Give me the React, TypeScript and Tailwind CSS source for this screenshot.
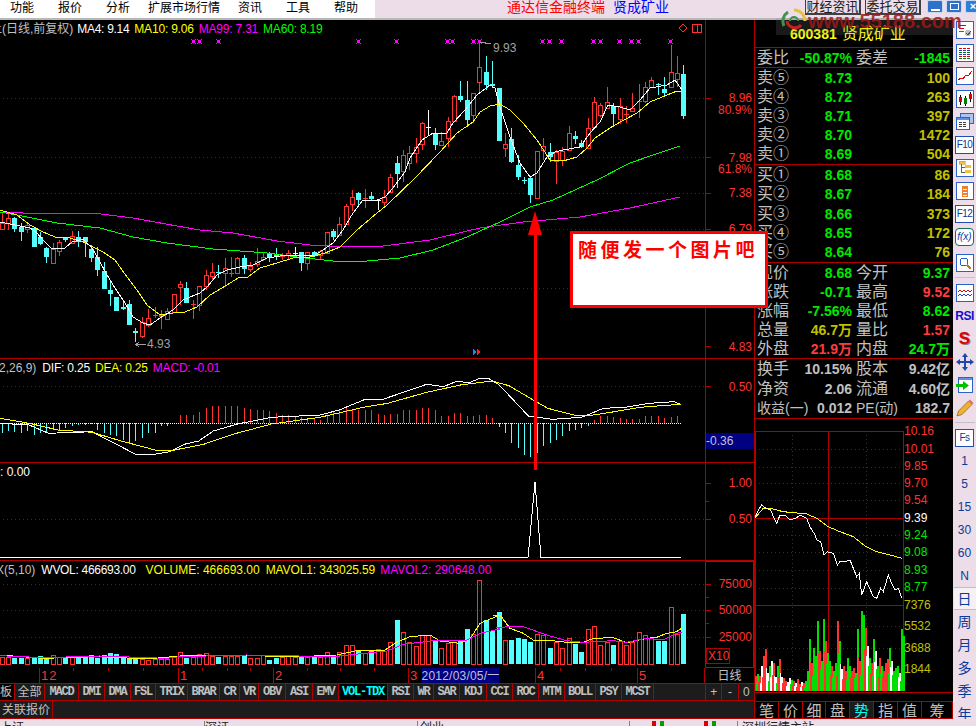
import React from 'react';

const LINE = '#b00000';
const DOT = '#a00000';
const UP = '#ff3232';
const DOWN = '#54ffff';

type Candle = [string, number, number, number, number];

// color, high, body top, body bottom, low (page pixels)
const candles: Candle[] = [
  ['r', 213, 223, 229, 229], ['r', 214, 218, 223, 230], ['c', 217, 218, 229, 232], ['c', 223, 227, 232, 241],
  ['r', 224, 225, 229, 233], ['c', 227, 228, 247, 247], ['c', 232, 237, 244, 245], ['c', 247, 248, 257, 263],
  ['r', 243, 249, 263, 263], ['r', 240, 242, 251, 256], ['c', 237, 237, 240, 242], ['r', 231, 236, 243, 243],
  ['c', 231, 237, 242, 247], ['c', 237, 237, 242, 257], ['c', 245, 249, 258, 262], ['c', 247, 257, 270, 276],
  ['c', 262, 271, 289, 289], ['c', 282, 290, 294, 306], ['c', 297, 297, 311, 311], ['c', 300, 307, 309, 310],
  ['c', 300, 304, 325, 325], ['c', 328, 331, 333, 342], ['r', 317, 322, 336, 338], ['r', 309, 318, 325, 327],
  ['r', 307, 315, 315, 318], ['r', 310, 315, 316, 329], ['r', 308, 311, 319, 319], ['r', 294, 294, 312, 312],
  ['r', 281, 284, 287, 305], ['c', 282, 288, 303, 303], ['r', 300, 304, 304, 319], ['r', 286, 286, 305, 311],
  ['r', 270, 275, 286, 290], ['r', 263, 272, 276, 280], ['c', 265, 272, 273, 278], ['r', 258, 268, 273, 287],
  ['r', 257, 273, 273, 277], ['r', 257, 258, 273, 274], ['c', 255, 258, 269, 274], ['r', 262, 266, 269, 272],
  ['r', 248, 261, 264, 267], ['r', 252, 257, 259, 261], ['c', 252, 253, 257, 262], ['c', 248, 254, 257, 260],
  ['r', 253, 256, 256, 260], ['r', 250, 253, 255, 260], ['w', 247, 253, 253, 255], ['c', 252, 252, 263, 271],
  ['r', 252, 252, 263, 270], ['c', 251, 252, 256, 257], ['r', 250, 251, 255, 259], ['r', 232, 232, 253, 253],
  ['c', 229, 231, 237, 240], ['r', 217, 224, 235, 236], ['r', 204, 206, 224, 225], ['r', 190, 197, 204, 211],
  ['c', 192, 193, 200, 205], ['r', 189, 198, 198, 208], ['c', 192, 196, 199, 201], ['w', 199, 200, 200, 210],
  ['r', 190, 197, 202, 207], ['r', 174, 177, 192, 193], ['c', 156, 163, 174, 188], ['r', 150, 155, 171, 182],
  ['r', 146, 153, 163, 170], ['r', 138, 147, 153, 163], ['r', 122, 123, 144, 150], ['w', 110, 127, 127, 135],
  ['c', 128, 133, 145, 150], ['r', 132, 141, 145, 146], ['r', 117, 121, 138, 147], ['r', 95, 96, 121, 122],
  ['c', 81, 96, 100, 102], ['c', 81, 100, 120, 127], ['r', 93, 93, 115, 123], ['r', 43, 67, 82, 93],
  ['c', 56, 72, 85, 90], ['c', 61, 84, 86, 88], ['c', 88, 88, 141, 141], ['r', 133, 144, 148, 157],
  ['c', 128, 139, 162, 163], ['c', 155, 165, 177, 180], ['c', 177, 180, 180, 184], ['c', 177, 178, 195, 203],
  ['r', 151, 151, 198, 199], ['r', 138, 146, 150, 160], ['c', 143, 152, 157, 162], ['r', 150, 152, 161, 184],
  ['r', 147, 151, 160, 166], ['r', 126, 133, 150, 150], ['c', 131, 136, 139, 144], ['c', 140, 143, 147, 148],
  ['r', 118, 128, 148, 149], ['r', 97, 102, 127, 127], ['r', 103, 105, 115, 117], ['r', 87, 102, 108, 109],
  ['c', 103, 106, 114, 127], ['r', 98, 106, 119, 124], ['r', 106, 114, 114, 123], ['r', 93, 108, 111, 112],
  ['r', 84, 101, 101, 118], ['r', 82, 87, 101, 103], ['r', 77, 80, 87, 88], ['c', 83, 84, 84, 95],
  ['c', 77, 89, 93, 96], ['r', 45, 72, 87, 87], ['r', 56, 73, 79, 87], ['c', 65, 74, 116, 119],
];

const ma4 = '0,222 20,226 30,228 37,233 43,240 52,249 65,248 72,242 83,239 92,248 100,262 107,275 115,288 125,303 133,317 143,323 150,325 160,318 173,310 183,300 190,297 200,293 207,287 217,275 227,270 240,267 253,265 267,258 287,255 300,255 313,256 323,250 333,243 343,230 353,213 363,200 377,200 385,197 393,188 405,172 410,158 422,140 433,133 447,133 453,123 465,110 477,95 490,85 495,88 500,107 510,137 520,163 530,177 537,173 547,157 555,152 563,150 580,147 590,133 600,122 608,105 620,107 630,110 640,100 650,88 667,85 675,80 682,90';
const ma10 = '0,210 17,215 30,225 43,232 55,237 70,238 83,242 93,247 103,252 115,260 127,277 137,290 147,305 160,315 173,313 185,312 197,307 210,295 227,285 238,278 248,277 260,268 277,263 293,258 310,257 325,253 340,247 357,230 377,213 387,205 415,178 440,152 457,133 473,122 480,112 490,106 500,104 510,110 523,123 537,140 550,160 563,161 577,157 587,148 595,138 613,126 637,113 650,102 667,95 677,91 682,92';
const ma99 = '0,212 23,213 93,213 133,218 177,226 200,230 233,233 277,241 310,245 350,247 383,246 430,240 467,231 480,228 523,222 580,217 630,208 680,197';
const ma60 = '0,212 17,215 57,223 100,228 133,237 167,243 213,249 267,253 297,257 333,261 367,261 400,258 433,250 467,237 500,222 530,207 553,200 597,180 630,163 653,155 680,146';

// bar tops, read off the volume pane
const volTops = [305, 305, 308, 310, 308, 310, 303, 308, 300, 307, 308, 307, 308, 308, 300, 308, 300, 294, 297, 308, 308, 305, 313, 315, 313, 313, 313, 303, 292, 308, 305, 297, 295, 303, 305, 303, 303, 303, 303, 308, 308, 300, 315, 310, 305, 300, 307, 307, 305, 307, 305, 292, 305, 292, 270, 270, 287, 293, 288, 282, 287, 262, 195, 232, 262, 273, 240, 240, 255, 280, 265, 262, 255, 222, 238, 75, 195, 228, 170, 255, 255, 250, 252, 260, 238, 240, 280, 262, 280, 250, 268, 290, 222, 212, 270, 260, 270, 258, 270, 262, 232, 240, 250, 258, 257, 155, 237, 178];

const volMa1 = [[0, 300], [130, 310], [300, 305], [440, 312], [540, 303], [740, 302], [900, 305], [1010, 300], [1080, 285], [1150, 288], [1190, 262], [1230, 245], [1290, 240], [1320, 258], [1380, 265], [1410, 252], [1440, 205], [1500, 180]];
const volMa1b = [[40, 180], [60, 180], [90, 220], [130, 235], [160, 255], [200, 255], [260, 262], [310, 262], [340, 250], [400, 248], [440, 263], [500, 250], [530, 247], [560, 235], [590, 230], [605, 220]];
const volMa2 = [[0, 302], [130, 308], [300, 303], [500, 310], [540, 305], [740, 300], [1000, 305], [1160, 288], [1210, 268], [1260, 262], [1320, 255], [1400, 255], [1440, 235], [1500, 222]];
const volMa2b = [[50, 217], [100, 215], [130, 215], [200, 240], [260, 257], [310, 262], [400, 257], [440, 262], [500, 250], [550, 255], [590, 235], [605, 232]];

const toPts = (a: number[][], b: number[][]) =>
  [...a.map(([x, y]) => `${x / 3},${555 + y / 3}`), ...b.map(([x, y]) => `${480 + x / 3},${555 + y / 3}`)].join(' ');

// MACD histogram, read at 3x: positive is red, negative cyan
const hist = [-30, -25, -28, -30, -25, -35, -30, -28, -20, -25, -15, -8, -5, -5, -4, -20, -30, -35, -40, -50, -60, -55, -45, -30, -30, -10, -8, 0, 23, 25, 25, 33, 45, 50, 52, 52, 50, 52, 45, 42, 38, 38, 35, 30, 25, 25, 20, 18, 15, 12, 10, 25, 35, 40, 45, 38, 38, 40, 38, 28, 25, 28, 28, 38, 38, 38, 45, 45, 38, 22, 22, 30, 30, 20, 20, 25, 25, 15, -12, -30, -60, -75, -95, -103, -90, -70, -60, -50, -40, -25, -20, -15, -8, 10, 20, 20, 18, 15, 12, 12, 12, 20, 22, 20, 15, 18, 20];

const macdPts = (s: string) =>
  s.split(' ').map((p) => {
    const [x, y] = p.split(',').map(Number);
    return `${(x / 2.063).toFixed(1)},${(355 + y / 3).toFixed(1)}`;
  }).join(' ');
const dif = macdPts('0,205 60,210 100,235 190,230 230,260 280,298 310,300 350,290 380,268 410,258 440,228 490,207 560,187 660,180 700,165 750,135 790,133 840,108 880,88 915,95 940,80 970,82 990,70 1010,72 1030,90 1090,183 1140,193 1200,187 1245,160 1290,157 1340,145 1390,140 1404,148');
const dea = macdPts('0,190 60,205 120,225 190,232 250,258 320,285 360,285 420,268 480,238 560,207 660,187 750,157 800,145 880,112 950,90 1015,78 1050,92 1100,135 1130,160 1190,182 1215,182 1260,172 1320,157 1404,148');

const z8Pts = (s: string) =>
  s.split(' ').map((p) => {
    const [x, y] = p.split(',').map(Number);
    return `${(750 + x / 3).toFixed(1)},${(420 + y / 3).toFixed(1)}`;
  }).join(' ');
const dayPrice = z8Pts('14,295 25,270 35,255 48,265 62,270 70,290 80,310 90,285 105,285 120,300 140,293 150,285 170,295 180,320 195,345 200,360 212,365 222,405 232,395 250,400 262,435 270,425 285,425 300,420 320,470 328,460 335,525 350,485 370,530 380,535 392,505 400,515 415,465 425,490 435,510 445,505 455,533');
const dayAvg = z8Pts('14,295 40,265 60,265 100,275 170,282 200,295 235,320 270,335 310,350 345,378 380,395 420,405 455,415');
const dayVols = [15, 17, 15, 25, 35, 42, 18, 25, 30, 28, 14, 25, 32, 14, 13, 10, 9, 13, 11, 10, 8, 12, 7, 9, 8, 10, 20, 52, 28, 43, 35, 70, 40, 30, 72, 50, 38, 30, 25, 20, 28, 70, 50, 22, 25, 20, 33, 25, 20, 23, 18, 62, 30, 80, 76, 63, 45, 33, 28, 52, 40, 25, 33, 25, 20, 28, 32, 43, 30, 20, 23, 25, 18, 62, 55];
const dayColors = 'RGRWRRWGWRWGRWRRWWGRWRRWRGGGRGGGRGGRGGRGGRGWRRGGRRGGRGGRWGRGWGRGRRRGWGGGW';
const dayColor = (i: number) => (dayColors[i] === 'R' ? UP : dayColors[i] === 'W' ? '#ffffff' : '#00e000');

const marks = [193, 199, 218, 358, 396, 447, 452, 473, 479, 542, 549, 561, 593, 600, 619, 631, 638, 670];

const candleX = (i: number) => Math.round(1.7 + 6.37 * i);

const Dotted = ({ y, x2 = 705, x1 = 3 }: { y: number; x2?: number; x1?: number }) => (
  <line x1={x1} x2={x2} y1={y + 0.5} y2={y + 0.5} stroke={DOT} strokeDasharray="1 3" />
);

const AxisText = ({ y, children, fill = UP }: { y: number; children: React.ReactNode; fill?: string }) => (
  <text x={752} y={y + 4} textAnchor="end" fontSize={12} fill={fill}>
    {children}
  </text>
);

const Line = ({ points, color }: { points: string; color: string }) => (
  <polyline points={points} fill="none" stroke={color} strokeWidth={1} shapeRendering="crispEdges" />
);

const MainChart = () => (
  <svg viewBox="0 20 754 338" className="absolute inset-0 h-full w-full" shapeRendering="crispEdges">
    {[98, 157, 193, 229, 288].map((y) => <Dotted key={y} y={y} />)}
    <line x1={705.5} x2={705.5} y1={20} y2={359} stroke={LINE} />
    {[98, 157, 193, 229, 346].map((y) => <line key={y} x1={705} x2={711} y1={y + 0.5} y2={y + 0.5} stroke={LINE} />)}
    {marks.map((x) => (
      <g key={x} fill="#ff00ff">
        <rect x={x - 2} y={39} width={1} height={1} />
        <rect x={x + 2} y={39} width={1} height={1} />
        <rect x={x - 1} y={40} width={3} height={3} />
        <rect x={x - 2} y={43} width={1} height={1} />
        <rect x={x + 2} y={43} width={1} height={1} />
      </g>
    ))}
    {candles.map(([c, hi, top, bot, lo], i) => {
      const x = candleX(i);
      const color = c === 'r' ? UP : c === 'c' ? DOWN : '#ffffff';
      return (
        <g key={i} stroke={color}>
          <line x1={x + 0.5} x2={x + 0.5} y1={hi} y2={lo} />
          {top === bot ? (
            <line x1={x - 2} x2={x + 3} y1={top + 0.5} y2={top + 0.5} />
          ) : c === 'c' ? (
            <rect x={x - 2} y={top} width={5} height={bot - top} fill={color} stroke="none" />
          ) : (
            <rect x={x - 1.5} y={top + 0.5} width={4} height={bot - top} fill="#000" />
          )}
        </g>
      );
    })}
    <Line points={ma99} color="#ff00ff" />
    <Line points={ma60} color="#00ff00" />
    <Line points={ma10} color="#ffff00" />
    <Line points={ma4} color="#ffffff" />
    <polyline points="480,42 491,44" stroke="#a0a0a0" fill="none" />
    <text x={493} y={52} fontSize={12} fill="#a0a0a0">9.93</text>
    <path d="M135 344.5h11M135 344.5l4 -2M135 344.5l4 2" stroke="#a0a0a0" fill="none" />
    <text x={147} y={348} fontSize={12} fill="#a0a0a0">4.93</text>
    <path d="M473 349l4 3l-4 3z" fill="#2080ff" />
    <path d="M477 349l4 3l-4 3z" fill="#ff2020" />
    <path d="M683 24l4 4l-4 4l-4 -4z" fill="none" stroke={UP} />
    <path d="M692.5 24.5h9v8h-9zM697.5 24.5v8" fill="none" stroke={UP} />
    <AxisText y={98}>8.96</AxisText>
    <AxisText y={110}>80.9%</AxisText>
    <AxisText y={158}>7.98</AxisText>
    <AxisText y={169}>61.8%</AxisText>
    <AxisText y={193}>7.38</AxisText>
    <AxisText y={229}>6.79</AxisText>
    <AxisText y={347}>4.83</AxisText>
  </svg>
);

const MacdChart = () => (
  <svg viewBox="0 359 754 103" className="absolute inset-0 h-full w-full" shapeRendering="crispEdges">
    <Dotted y={386} />
    <line x1={705.5} x2={705.5} y1={359} y2={463} stroke={LINE} />
    <line x1={705} x2={711} y1={386.5} y2={386.5} stroke={LINE} />
    {hist.map((v, i) => (
      <line
        key={i}
        x1={candleX(i) + 0.5}
        x2={candleX(i) + 0.5}
        y1={423}
        y2={423 - v / 3}
        stroke={v > 0 ? UP : DOWN}
      />
    ))}
    <line x1={0} x2={681} y1={423.5} y2={423.5} stroke="#ffffff" strokeDasharray="1 1" />
    <Line points={dif} color="#ffffff" />
    <Line points={dea} color="#ffff00" />
    <AxisText y={387}>0.50</AxisText>
  </svg>
);

const SignalChart = () => (
  <svg viewBox="0 463 754 97" className="absolute inset-0 h-full w-full" shapeRendering="crispEdges">
    <Dotted y={519} />
    <line x1={705.5} x2={705.5} y1={463} y2={561} stroke={LINE} />
    <line x1={705} x2={711} y1={483.5} y2={483.5} stroke={LINE} />
    <line x1={705} x2={709} y1={501.5} y2={501.5} stroke={LINE} />
    <line x1={705} x2={711} y1={519.5} y2={519.5} stroke={LINE} />
    <polyline points="0,557.5 528,557.5 535,482 541,557.5 681,557.5" fill="none" stroke="#ffffff" />
    <AxisText y={483}>1.00</AxisText>
    <AxisText y={519}>0.50</AxisText>
  </svg>
);

const VolumeChart = () => (
  <svg viewBox="0 561 754 107" className="absolute inset-0 h-full w-full" shapeRendering="crispEdges">
    {[584, 610, 637].map((y) => <Dotted key={y} y={y} />)}
    <rect x={705.5} y={561.5} width={48} height={106} fill="none" stroke="#c80000" strokeWidth={1.5} />
    {[584, 597, 610, 623, 637].map((y, i) => <line key={y} x1={706} x2={i % 2 ? 709 : 711} y1={y + 0.5} y2={y + 0.5} stroke={LINE} />)}
    {volTops.map((z, i) => {
      const x = candleX(i);
      const top = 555 + z / 3;
      return candles[i][0] === 'c' ? (
        <rect key={i} x={x - 2} y={top} width={5} height={664 - top} fill={DOWN} />
      ) : (
        <rect key={i} x={x - 1.5} y={Math.round(top) + 0.5} width={4} height={664 - Math.round(top)} fill="none" stroke={UP} />
      );
    })}
    <Line points={toPts(volMa1, volMa1b)} color="#ffff00" />
    <Line points={toPts(volMa2, volMa2b)} color="#ff00ff" />
    <AxisText y={584}>75000</AxisText>
    <AxisText y={610}>50000</AxisText>
    <AxisText y={637}>25000</AxisText>
    <rect x={706.5} y={648.5} width={23} height={15} fill="none" stroke={LINE} />
    <text x={708} y={660} fontSize={12} fill={UP}>X10</text>
  </svg>
);

const dateMarks = [
  { x: 39, label: '12' },
  { x: 178, label: '1' },
  { x: 273, label: '2' },
  { x: 408, label: '3' },
  { x: 535, label: '4' },
  { x: 637, label: '5' },
];
const minorTicks = [73, 108, 143, 202, 227, 250, 307, 340, 374, 560, 585, 611];

const DateAxis = () => (
  <div className="flex h-[16px] shrink-0 border-b border-[#b00000]">
    <div className="relative w-[705px] border-r border-[#b00000]">
      <svg viewBox="0 668 704 15" className="absolute inset-0 h-full w-full" shapeRendering="crispEdges">
        {minorTicks.map((x) => <line key={x} x1={x + 0.5} x2={x + 0.5} y1={668} y2={671} stroke={LINE} />)}
        {dateMarks.map((m) => (
          <g key={m.x}>
            <line x1={m.x + 0.5} x2={m.x + 0.5} y1={668} y2={683} stroke={LINE} />
            <text x={m.x + 2} y={680} fontSize={13} letterSpacing={1} fill={UP}>{m.label}</text>
          </g>
        ))}
      </svg>
      <div className="absolute left-[422px] top-0 flex h-[15px] w-[77px] items-center justify-center bg-[#000080] text-[12px] leading-none tracking-[0.2px] whitespace-nowrap text-[#c0c0d8]">
        2012/03/05/一
      </div>
    </div>
    <div className="flex flex-1 items-center justify-center text-[12px] leading-none text-[#c0c0c0]">日线</div>
  </div>
);

const tabs = [
  { label: '全部', w: 'w-[30px]', cjk: true },
  { label: 'MACD', w: 'w-[34px]' },
  { label: 'DMI', w: 'w-[26px]' },
  { label: 'DMA', w: 'w-[26px]' },
  { label: 'FSL', w: 'w-[25px]' },
  { label: 'TRIX', w: 'w-[32px]' },
  { label: 'BRAR', w: 'w-[32px]' },
  { label: 'CR', w: 'w-[20px]' },
  { label: 'VR', w: 'w-[19px]' },
  { label: 'OBV', w: 'w-[27px]' },
  { label: 'ASI', w: 'w-[27px]' },
  { label: 'EMV', w: 'w-[26px]' },
  { label: 'VOL-TDX', w: 'w-[49px]', active: true },
  { label: 'RSI', w: 'w-[26px]' },
  { label: 'WR', w: 'w-[20px]' },
  { label: 'SAR', w: 'w-[26px]' },
  { label: 'KDJ', w: 'w-[27px]' },
  { label: 'CCI', w: 'w-[26px]' },
  { label: 'ROC', w: 'w-[26px]' },
  { label: 'MTM', w: 'w-[26px]' },
  { label: 'BOLL', w: 'w-[31px]' },
  { label: 'PSY', w: 'w-[26px]' },
  { label: 'MCST', w: 'w-[32px]' },
];

const TabBar = () => (
  <div className="flex h-[17px] shrink-0 border-b border-[#b00000] bg-[#1c1c1c] leading-none text-[#c0c0c0]">
    <div className="flex w-[15px] items-center border-r border-[#b00000] bg-black text-[12px]">板</div>
    {tabs.map((t) => (
      <div
        key={t.label}
        className={`flex ${t.w} items-center justify-center border-r border-[#b00000] ${t.cjk ? 'text-[12px]' : "text-[12px] font-bold tracking-[-1.2px] [font-family:'Liberation_Mono',monospace]"} ${t.active ? 'bg-black text-[#00ffff]' : ''}`}
      >
        {t.label}
      </div>
    ))}
    <div className="w-[52px] border-r border-[#b00000]" />
    {['+', '-', '0'].map((s) => (
      <div key={s} className="flex flex-1 items-center justify-center border-r border-[#b00000] text-[12px] last:border-r-0">
        {s}
      </div>
    ))}
  </div>
);

const Legend = ({ children }: { children: React.ReactNode }) => (
  <div className="absolute left-0 top-[2px] flex h-[14px] items-center text-[12px] leading-none whitespace-nowrap">{children}</div>
);

const Gray = 'text-[#c0c0c0]';

type Row = { label: string; price: string; vol: string };
const sells: Row[] = [
  { label: '卖⑤', price: '8.73', vol: '100' },
  { label: '卖④', price: '8.72', vol: '263' },
  { label: '卖③', price: '8.71', vol: '397' },
  { label: '卖②', price: '8.70', vol: '1472' },
  { label: '卖①', price: '8.69', vol: '504' },
];
const buys: Row[] = [
  { label: '买①', price: '8.68', vol: '86' },
  { label: '买②', price: '8.67', vol: '184' },
  { label: '买③', price: '8.66', vol: '373' },
  { label: '买④', price: '8.65', vol: '172' },
  { label: '买⑤', price: '8.64', vol: '76' },
];

const GREEN = 'text-[#00e800]';
const RED = 'text-[#ff3c3c]';
const OLIVE = 'text-[#c0c000]';

const stats = [
  { a: '现价', av: '8.68', ac: GREEN, b: '今开', bv: '9.37', bc: GREEN },
  { a: '涨跌', av: '-0.71', ac: GREEN, b: '最高', bv: '9.52', bc: RED },
  { a: '涨幅', av: '-7.56%', ac: GREEN, b: '最低', bv: '8.62', bc: GREEN },
  { a: '总量', av: '46.7万', ac: OLIVE, b: '量比', bv: '1.57', bc: RED },
  { a: '外盘', av: '21.9万', ac: RED, b: '内盘', bv: '24.7万', bc: GREEN },
];
const info = [
  { a: '换手', av: '10.15%', b: '股本', bv: '9.42亿' },
  { a: '净资', av: '2.06', b: '流通', bv: '4.60亿' },
  { a: '收益(一)', av: '0.012', b: 'PE(动)', bv: '182.7', small: true },
];

const OrderRows = ({ rows }: { rows: Row[] }) => (
  <>
    {rows.map((r) => (
      <div key={r.label} className="flex min-h-0 flex-1 items-center pl-[2px] pr-[3px] leading-none font-bold">
        <span className={`w-[40px] text-[16px] font-normal ${Gray}`}>{r.label}</span>
        <span className={`w-[55px] text-right text-[14px] ${GREEN}`}>{r.price}</span>
        <span className={`flex-1 text-right text-[14px] ${OLIVE}`}>{r.vol}</span>
      </div>
    ))}
  </>
);

type PairProps = { a: string; av: string; ac: string; b: string; bv: string; bc: string; small?: boolean };

const PairRow = ({ a, av, ac, b, bv, bc, small }: PairProps) => (
  <div className="flex min-h-0 flex-1 items-center pl-[2px] pr-[3px] leading-none whitespace-nowrap">
    <span className={`w-[40px] ${small ? 'text-[14px]' : 'text-[16px]'} ${Gray}`}>{a}</span>
    <span className={`w-[55px] text-right text-[14px] font-bold ${ac}`}>{av}</span>
    <span className={`ml-[4px] w-[32px] ${small ? 'text-[14px]' : 'text-[16px]'} ${Gray}`}>{b}</span>
    <span className={`flex-1 text-right text-[14px] font-bold ${bc}`}>{bv}</span>
  </div>
);

const dayLabels: [string, number, string][] = [
  ['10.16', 431, UP], ['10.01', 449, UP], ['9.85', 466, UP], ['9.70', 483, UP], ['9.54', 500, UP],
  ['9.39', 518, '#ffffff'], ['9.24', 535, '#00e800'], ['9.08', 552, '#00e800'], ['8.93', 570, '#00e800'], ['8.77', 587, '#00e800'],
  ['7376', 605, '#c0c000'], ['5532', 626, '#c0c000'], ['3688', 648, '#c0c000'], ['1844', 669, '#c0c000'],
];

const IntradayChart = () => (
  <svg viewBox="755 419 198 273" className="h-[273px] w-[198px] shrink-0" shapeRendering="crispEdges">
    {[449, 467, 483, 500, 535, 552, 570, 588, 626, 648, 669].map((y) => <Dotted key={y} y={y} x1={755} x2={903} />)}
    {[792, 866].map((x) => <line key={x} x1={x + 0.5} x2={x + 0.5} y1={431} y2={691} stroke={DOT} strokeDasharray="1 3" />)}
    {[431, 518, 605].map((y) => <line key={y} x1={755} x2={903} y1={y + 0.5} y2={y + 0.5} stroke={LINE} />)}
    {[755, 828, 903].map((x) => <line key={x} x1={x + 0.5} x2={x + 0.5} y1={431} y2={691} stroke={LINE} />)}
    {dayVols.map((h, i) => (
      <g key={i}>
        <rect x={755 + i * 2} y={691 - h} width={2} height={h} fill={dayColor(i)} />
        <rect x={756 + i * 2} y={691 - h * 0.55} width={1} height={h * 0.55} fill={dayColor(i + 1)} />
      </g>
    ))}
    <Line points={dayAvg} color="#ffff00" />
    <Line points={dayPrice} color="#ffffff" />
    {dayLabels.map(([t, y, c]) => (
      <text key={t} x={904} y={y + 4} fontSize={12} fill={c}>{t}</text>
    ))}
  </svg>
);

const rightTabs = [
  { t: '笔', w: 'w-[24px]' },
  { t: '价', w: 'w-[24px]' },
  { t: '细', w: 'w-[23px]' },
  { t: '盘', w: 'w-[24px]' },
  { t: '势', w: 'w-[24px]', active: true },
  { t: '指', w: 'w-[24px]' },
  { t: '值', w: 'w-[24px]' },
  { t: '筹', w: 'flex-1' },
];

const QuotePanel = () => (
  <div className="flex w-[198px] shrink-0 flex-col">
    <div className="flex h-[28px] shrink-0 items-center border-b border-[#b00000] pl-[35px] leading-none text-[#ffff00]">
      <span className="text-[14px] font-bold">600381</span>
      <span className="ml-[5px] text-[16px]">贤成矿业</span>
    </div>
    <div className="flex h-[20px] shrink-0 items-center border-b border-[#b00000] pl-[2px] pr-[3px] leading-none whitespace-nowrap">
      <span className={`w-[32px] text-[16px] ${Gray}`}>委比</span>
      <span className={`w-[63px] text-right text-[14px] font-bold ${GREEN}`}>-50.87%</span>
      <span className={`ml-[4px] w-[32px] text-[16px] ${Gray}`}>委差</span>
      <span className={`flex-1 text-right text-[14px] font-bold ${GREEN}`}>-1845</span>
    </div>
    <div className="flex h-[97px] shrink-0 flex-col border-b border-[#b00000]"><OrderRows rows={sells} /></div>
    <div className="flex h-[98px] shrink-0 flex-col border-b border-[#b00000]"><OrderRows rows={buys} /></div>
    <div className="flex h-[96px] shrink-0 flex-col border-b border-[#b00000]">
      {stats.map((s) => <PairRow key={s.a} {...s} />)}
    </div>
    <div className="flex h-[60px] shrink-0 flex-col border-b border-[#b00000]">
      {info.map((s) => <PairRow key={s.a} {...s} ac={Gray} bc={Gray} />)}
    </div>
    <IntradayChart />
    <div className="h-[10px] shrink-0 border-y border-[#b00000]" />
    <div className="flex h-[17px] shrink-0 border-b border-[#b00000] leading-none">
      {rightTabs.map((r) => (
        <div
          key={r.t}
          className={`flex ${r.w} items-center justify-center border-r border-[#b00000] text-[15px] ${r.active ? 'bg-[#1c1c1c] text-[#00ffff]' : Gray}`}
        >
          {r.t}
        </div>
      ))}
    </div>
  </div>
);

const IconBox = ({ children }: { children: React.ReactNode }) => (
  <svg viewBox="0 0 16 16" className="h-[16px] w-[16px] bg-white outline outline-[1px] outline-[#2a62c8]" shapeRendering="crispEdges">
    {children}
  </svg>
);

const TextBox = ({ children }: { children: React.ReactNode }) => (
  <span className="flex h-[16px] w-[17px] items-center justify-center bg-white text-[10px] leading-none tracking-[-0.5px] text-[#0a3a9a] outline outline-[1px] outline-[#1f50b0]">
    {children}
  </span>
);

const Tool = ({ children }: { children: React.ReactNode }) => (
  <div className="flex h-[23px] shrink-0 items-center justify-center leading-none">{children}</div>
);

const Toolbar = () => (
  <div className="-mt-[2px] flex w-[23px] shrink-0 flex-col items-center bg-[#ecdde8]">
    <Tool>
      <IconBox>
        <path d="M2 3h7M2 6h5" stroke="#e00000" />
        <path d="M2 9h5" stroke="#00a000" />
        <circle cx={11} cy={11} r={3} fill="#c0c0c0" />
        <path d="M9 11l2 2l3 -4" stroke="#505050" fill="none" />
      </IconBox>
    </Tool>
    <Tool>
      <IconBox>
        <path d="M2 3h12M2 11h12" stroke="#e00000" strokeDasharray="3 1" />
        <path d="M2 5h12M2 9h12" stroke="#2040c0" strokeDasharray="3 1" />
        <path d="M2 7h12M2 13h12" stroke="#008000" strokeDasharray="3 1" />
      </IconBox>
    </Tool>
    <Tool>
      <IconBox>
        <path d="M1 12l3 -2l2 1l3 -4l2 1l4 -5" stroke="#e00000" fill="none" />
      </IconBox>
    </Tool>
    <Tool>
      <IconBox>
        <path d="M3 4v10" stroke="#000" />
        <rect x={2} y={6} width={3} height={5} fill="#e00000" />
        <path d="M8 5v10" stroke="#000" />
        <rect x={7} y={7} width={3} height={6} fill="#008000" />
        <path d="M13 1v10" stroke="#000" />
        <rect x={12} y={3} width={3} height={5} fill="#e00000" />
      </IconBox>
    </Tool>
    <Tool>
      <svg viewBox="0 0 18 17" className="h-[17px] w-[18px]">
        <rect x={4.5} y={0.5} width={13} height={10} fill="#a8c4f0" stroke="#2a62c8" />
        <rect x={0.5} y={4.5} width={13} height={12} fill="#fff" stroke="#2a62c8" />
        <rect x={1} y={5} width={12} height={2} fill="#6090e0" />
        <path d="M3 9.5h8M3 11.5h8M3 13.5h8" stroke="#404040" strokeDasharray="3 1" />
      </svg>
    </Tool>
    <Tool><TextBox>F10</TextBox></Tool>
    <Tool>
      <IconBox>
        <rect x={2} y={1} width={6} height={3} fill="#f0c040" stroke="#c09020" strokeWidth={0.5} />
        <path d="M4 4v8h4M4 7h4" stroke="#606060" fill="none" />
        <rect x={8} y={5} width={6} height={3} fill="#f0c040" />
        <rect x={8} y={10} width={6} height={3} fill="#f0c040" />
      </IconBox>
    </Tool>
    <Tool>
      <IconBox>
        <path d="M5 3h6v11h-6z" fill="#f08030" />
        <path d="M6 6h4M6 9h4M6 12h4" stroke="#fff" />
      </IconBox>
    </Tool>
    <Tool><TextBox>F12</TextBox></Tool>
    <Tool>
      <span className="flex h-[16px] w-[17px] items-center justify-center rounded-[3px] bg-white text-[10px] italic leading-none text-[#0a3a9a] outline outline-[1px] outline-[#107060]">
        f(x)
      </span>
    </Tool>
    <div className="h-[3px] shrink-0" />
    <Tool>
      <IconBox>
        <circle cx={7} cy={7} r={4} fill="none" stroke="#2060d0" />
        <path d="M10 10l4 4" stroke="#b08020" strokeWidth={2} />
      </IconBox>
    </Tool>
    <div className="my-[3px] h-px w-[20px] shrink-0 bg-[#c8c0c8]" />
    <Tool>
      <IconBox>
        <path d="M1 7l2 -2l2 2l2 -2l2 2l2 -2l2 2l2 -2" stroke="#e00000" fill="none" />
        <path d="M1 11l2 -2l2 2l2 -2l2 2l2 -2l2 2l2 -2" stroke="#2040c0" fill="none" />
      </IconBox>
    </Tool>
    <Tool><span className="text-[12px] font-bold tracking-[-0.5px] text-[#1010d0]">RSI</span></Tool>
    <Tool>
      <span className="text-[17px] font-bold text-[#e00000] [text-shadow:1px_1px_0_#808080]">S</span>
    </Tool>
    <Tool>
      <svg viewBox="0 0 18 18" className="h-[18px] w-[18px]">
        <path d="M9 0l3 4h-2v4h4v-2l4 3l-4 3v-2h-4v4h2l-3 4l-3 -4h2v-4h-4v2l-4 -3l4 -3v2h4v-4h-2z" fill="#1848b0" />
      </svg>
    </Tool>
    <Tool>
      <svg viewBox="0 0 18 18" className="h-[18px] w-[18px]">
        <rect x={2.5} y={1.5} width={14} height={15} fill="#fff" stroke="#2a62c8" />
        <rect x={3} y={2} width={13} height={2} fill="#6090e0" />
        <path d="M0 8h7v-3l6 4.5l-6 4.5v-3h-7z" fill="#00c000" />
      </svg>
    </Tool>
    <Tool>
      <svg viewBox="0 0 18 18" className="h-[18px] w-[18px]">
        <path d="M1 17l1.5 -5l10 -10l3.5 3.5l-10 10z" fill="#f0b030" stroke="#806020" strokeWidth={0.7} />
        <path d="M12.5 2l1.5 -1.5l3.5 3.5l-1.5 1.5z" fill="#e07070" />
      </svg>
    </Tool>
    <div className="my-[3px] h-px w-[20px] shrink-0 bg-[#c8c0c8]" />
    <Tool><TextBox>Fs</TextBox></Tool>
    {['1', '5', '15', '30', '60', 'N'].map((t) => (
      <Tool key={t}><span className="text-[12px] text-[#0a3a9a]">{t}</span></Tool>
    ))}
    <div className="flex h-[23px] w-[22px] shrink-0 items-center justify-center border-y border-[#c0c0c0] bg-[#f4f0f4] text-[14px] leading-none text-[#0a3a9a]">日</div>
    {['周', '月', '多', '季', '年'].map((t) => (
      <Tool key={t}><span className="text-[14px] text-[#0a3a9a]">{t}</span></Tool>
    ))}
  </div>
);

const menus = [
  { t: '功能', c: 'ml-[10px]' },
  { t: '报价', c: 'ml-[24px]' },
  { t: '分析', c: 'ml-[24px]' },
  { t: '扩展市场行情', c: 'ml-[18px]' },
  { t: '资讯', c: 'ml-[18px]' },
  { t: '工具', c: 'ml-[24px]' },
  { t: '帮助', c: 'ml-[24px]' },
];

const WinBtn = ({ children, close }: { children: React.ReactNode; close?: boolean }) => (
  <div className={`flex h-[13px] w-[16px] shrink-0 items-center justify-center rounded-[2px] border border-[#c8d8f0] ${close ? 'bg-[#2f7fd8]' : 'bg-[#3070c8]'}`}>
    {children}
  </div>
);

const MenuBar = () => (
  <div className="flex h-[18px] shrink-0 items-start whitespace-nowrap bg-[#ecdde8] text-[12px]">
    <div className="flex h-[18px] w-[375px] shrink-0 items-center bg-white pb-[3px] leading-none text-black">
      {menus.map((m) => <span key={m.t} className={m.c}>{m.t}</span>)}
    </div>
    <span className="ml-[132px] shrink-0 text-[14px] leading-[14px] text-[#ff0000]">通达信金融终端</span>
    <span className="ml-[8px] shrink-0 text-[14px] leading-[14px] text-[#0000ff]">贤成矿业</span>
    <div className="ml-[136px] flex shrink-0 gap-[4px]">
      {['财经资讯', '委托交易'].map((b) => (
        <div key={b} className="flex h-[15px] w-[56px] items-center justify-center border-r-2 border-b-2 border-l border-[#404040] text-[13px] leading-none text-[#202020]">
          {b}
        </div>
      ))}
    </div>
    <div className="ml-[6px] flex shrink-0 gap-[3px]">
      <WinBtn><span className="mt-[6px] block h-[2px] w-[9px] bg-white" /></WinBtn>
      <WinBtn><span className="block h-[7px] w-[9px] border border-white" /></WinBtn>
      <WinBtn close><span className="text-[11px] font-bold leading-none text-white">×</span></WinBtn>
    </div>
  </div>
);

const StatusRow = () => (
  <div className="flex h-[7px] shrink-0 overflow-hidden bg-[#ecdde8] pt-[2px] text-[12px] leading-[14px] text-[#202020]">
    <span className="w-[205px] shrink-0 border-r border-[#808080]">上证</span>
    <span className="w-[213px] shrink-0 border-r border-[#808080]">深证</span>
    <span className="w-[212px] shrink-0 border-r border-[#808080] pl-[2px]">创业</span>
    <div className="flex w-[108px] shrink-0 gap-[4px] border-r border-[#808080] pl-[4px]">
      <span className="ml-[18px] h-[5px] w-[4px] bg-[#e00000]" />
      <span className="h-[5px] w-[4px] bg-[#00a000]" />
      <span className="ml-[36px] h-[5px] w-[4px] bg-[#e00000]" />
      <span className="h-[5px] w-[4px] bg-[#00a000]" />
    </div>
    <span className="ml-[4px]">深圳行情主站</span>
  </div>
);

const Annotation = () => (
  <>
    <div className="absolute left-[534px] top-[232px] h-[238px] w-[3px] bg-[#ff0000]" />
    <svg viewBox="0 0 14 24" className="absolute left-[528px] top-[211px] h-[24px] w-[14px]">
      <path d="M7 0l7 24h-14z" fill="#ff0000" />
    </svg>
    <div className="absolute left-[570px] top-[231px] h-[77px] w-[198px] border-[3px] border-[#ff0000] bg-white pl-[5px] pt-[5px]">
      <span className="text-[19px] leading-[24px] font-bold tracking-[3.5px] whitespace-nowrap text-[#ff0000]">随便发一个图片吧</span>
    </div>
  </>
);

const Watermark = () => (
  <>
    <div className="absolute left-[776px] top-[18px] h-[17px] w-[177px] bg-[#808080]/20" />
    <svg viewBox="0 0 26 26" className="absolute left-[781px] top-[8px] h-[26px] w-[26px]">
      <path d="M13 2a11 11 0 0 1 11 11" stroke="#e8c040" strokeWidth={3} fill="none" />
      <path d="M3 18a11 11 0 0 1 4 -14" stroke="#409050" strokeWidth={3} fill="none" />
      <path d="M6 13a8 8 0 0 0 14 4" stroke="#c02020" strokeWidth={3} fill="none" />
      <path d="M9 13a4 4 0 0 1 8 0" stroke="#409050" strokeWidth={2} fill="none" />
    </svg>
    <span className="absolute left-[808px] top-[9px] text-[20px] leading-[24px] font-bold whitespace-nowrap text-[#a01818]/85">www.55188.com</span>
  </>
);

export default function App() {
  return (
    <div className="relative flex h-[726px] w-[976px] flex-col overflow-hidden bg-black [font-family:'Liberation_Sans','Noto_Sans_CJK_SC',sans-serif]">
      <MenuBar />
      <div className="h-[2px] shrink-0 bg-[#b8b8b8]" />
      <div className="flex h-[699px] shrink-0">
        <div className="flex w-[755px] shrink-0 flex-col border-r border-[#b00000]">
          <div className="relative h-[339px] shrink-0 border-b border-[#b00000]">
            <MainChart />
            <Legend>
              <span className={`${Gray} -ml-[10px]`}>上(日线,前复权)</span>
              <span className="ml-[4px] tracking-[-0.3px] text-white">MA4: 9.14</span>
              <span className="ml-[5px] tracking-[-0.2px] text-[#ffff00]">MA10: 9.06</span>
              <span className="ml-[5px] tracking-[-0.2px] text-[#ff00ff]">MA99: 7.31</span>
              <span className="ml-[5px] tracking-[-0.2px] text-[#00ff00]">MA60: 8.19</span>
            </Legend>
          </div>
          <div className="relative h-[104px] shrink-0 border-b border-[#b00000]">
            <MacdChart />
            <Legend>
              <span className={`${Gray} -ml-[1px]`}>2,26,9)</span>
              <span className="ml-[6px] tracking-[-0.2px] text-white">DIF: 0.25</span>
              <span className="ml-[5px] tracking-[-0.2px] text-[#ffff00]">DEA: 0.25</span>
              <span className="ml-[5px] tracking-[-0.2px] text-[#ff00ff]">MACD: -0.01</span>
            </Legend>
            <div className="absolute left-[706px] top-[74px] flex h-[16px] w-[48px] items-center bg-[#000080] text-[12px] leading-none text-[#c0c0e0]">-0.36</div>
          </div>
          <div className="relative h-[98px] shrink-0 border-b border-[#b00000]">
            <SignalChart />
            <Legend><span className="text-white">: 0.00</span></Legend>
          </div>
          <div className="relative h-[107px] shrink-0">
            <VolumeChart />
            <Legend>
              <span className={`${Gray} -ml-[4px]`}>X(5,10)</span>
              <span className="ml-[6px] tracking-[-0.3px] text-white">WVOL: 466693.00</span>
              <span className="ml-[10px] text-[#ffff00]">VOLUME: 466693.00</span>
              <span className="ml-[6px] tracking-[-0.1px] text-[#ffff00]">MAVOL1: 343025.59</span>
              <span className="ml-[5px] text-[#ff00ff]">MAVOL2: 290648.00</span>
            </Legend>
          </div>
          <DateAxis />
          <TabBar />
          <div className="flex h-[18px] shrink-0 border-b border-[#b00000] bg-[#1c1c1c] leading-none text-[#c0c0c0]">
            <div className="flex w-[53px] items-center border-r border-[#b00000] pl-[2px] text-[12px]">关联报价</div>
          </div>
        </div>
        <QuotePanel />
        <Toolbar />
      </div>
      <StatusRow />
      <Annotation />
      <Watermark />
    </div>
  );
}
